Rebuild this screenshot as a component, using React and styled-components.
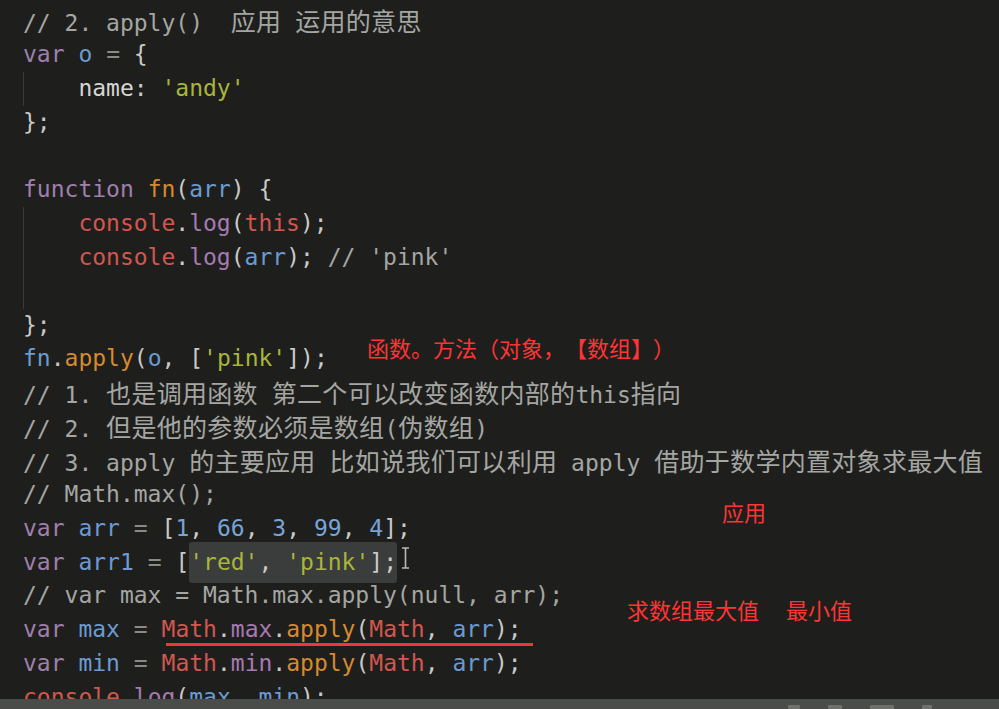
import React from 'react'
import styled, { createGlobalStyle } from 'styled-components'

const GlobalStyle = createGlobalStyle`
  html, body {
    margin: 0;
    padding: 0;
    background: #1e1f1d;
  }
`

// token colours, roughly a muted monokai as it shows in the video
const colors = {
  cm: '#a5a6a2',
  kw: '#a07fac',
  id: '#6b9bd2',
  op: '#8a8b87',
  p: '#c9c9c6',
  prop: '#d6d6d3',
  str: '#a9b53b',
  fn: '#d68a2f',
  obj: '#d1574f',
  mth: '#a67ab1',
  num: '#79a4d8',
}

const LINE = 33.85

const Screen = styled.div`
  width: 999px;
  height: 709px;
  display: flex;
  flex-direction: column;
  background: #1e1f1d;
  overflow: hidden;
`

const Editor = styled.div`
  position: relative;
  flex: 1;
  overflow: hidden;
  padding: 4px 0 0 23px;
  font-family: 'DejaVu Sans Mono', 'Liberation Mono', monospace;
  font-size: 23px;
  color: #c9c9c6;
`

const Line = styled.div`
  height: ${LINE}px;
  line-height: ${LINE}px;
  white-space: pre;
`

const Indent = styled.span`
  display: inline-block;
  width: 4ch;
  height: ${LINE}px;
  vertical-align: top;
  box-sizing: border-box;
  border-left: 1px solid ${p => (p.$guide ? '#3a3b33' : 'transparent')};
`

const Tok = styled.span`
  color: ${p => colors[p.$k] || colors.p};
`

const Cjk = styled.span`
  font-family: 'Noto Sans CJK SC', sans-serif;
  font-size: 25px;
  letter-spacing: 0.3px;
  text-spacing-trim: space-all;
`

const Selection = styled.span`
  background: #3b3d3c;
  border-radius: 3px;
  padding: 7px 0 8px;
`

const Note = styled.div`
  position: absolute;
  left: ${p => p.$x}px;
  top: ${p => p.$y}px;
  font-family: 'Noto Sans CJK SC', sans-serif;
  font-size: 22px;
  line-height: 22px;
  color: #ff3434;
  white-space: pre;
  text-spacing-trim: space-all;
  display: flex;
  gap: ${p => p.$gap || 0}px;
`

const Underline = styled.div`
  position: absolute;
  left: 166px;
  top: 643px;
  width: 367px;
  height: 3px;
  background: #f5333a;
`

const Caret = styled.svg`
  position: absolute;
  left: 401px;
  top: 547px;
`

const PlayerBar = styled.div`
  height: 10px;
  background: #4a4c49;
  display: flex;
  gap: 28px;
  padding-left: 788px;
`

const Blip = styled.span`
  margin-top: 6px;
  width: ${p => p.$w}px;
  height: 4px;
  background: #6e706c;
  border-radius: 1px;
`

const CJK_RUN = /([\u3000-\u303f\u4e00-\u9fff\uff00-\uffef]+)/
const CJK_CHAR = /[\u3000-\u303f\u4e00-\u9fff\uff00-\uffef]/

const splitCjk = text =>
  text.split(CJK_RUN).map((part, i) => (CJK_CHAR.test(part) ? <Cjk key={i}>{part}</Cjk> : part))

const T = ({ k, children }) => <Tok $k={k}>{splitCjk(children)}</Tok>

const lines = [
  { toks: [['// 2. apply()  应用 运用的意思', 'cm']] },
  { toks: [['var', 'kw'], [' '], ['o', 'id'], [' '], ['=', 'op'], [' '], ['{', 'p']] },
  { indent: true, toks: [['name', 'prop'], [':', 'p'], [' '], ["'andy'", 'str']] },
  { toks: [['};', 'p']] },
  { toks: [] },
  {
    toks: [['function', 'kw'], [' '], ['fn', 'fn'], ['(', 'p'], ['arr', 'id'], [')', 'p'], [' '], ['{', 'p']],
  },
  {
    indent: true,
    toks: [['console', 'obj'], ['.', 'p'], ['log', 'mth'], ['(', 'p'], ['this', 'obj'], [');', 'p']],
  },
  {
    indent: true,
    toks: [
      ['console', 'obj'], ['.', 'p'], ['log', 'mth'], ['(', 'p'], ['arr', 'id'], [');', 'p'],
      [" // 'pink'", 'cm'],
    ],
  },
  { indent: true, toks: [] },
  { toks: [['};', 'p']] },
  {
    toks: [
      ['fn', 'id'], ['.', 'p'], ['apply', 'fn'], ['(', 'p'], ['o', 'id'], [', ', 'p'], ['[', 'p'],
      ["'pink'", 'str'], [']);', 'p'],
    ],
  },
  { toks: [['// 1. 也是调用函数 第二个可以改变函数内部的this指向', 'cm']] },
  { toks: [['// 2. 但是他的参数必须是数组(伪数组)', 'cm']] },
  { toks: [['// 3. apply 的主要应用 比如说我们可以利用 apply 借助于数学内置对象求最大值', 'cm']] },
  { toks: [['// Math.max();', 'cm']] },
  {
    toks: [
      ['var', 'kw'], [' '], ['arr', 'id'], [' '], ['=', 'op'], [' '], ['[', 'p'],
      ['1', 'num'], [', ', 'p'], ['66', 'num'], [', ', 'p'], ['3', 'num'], [', ', 'p'],
      ['99', 'num'], [', ', 'p'], ['4', 'num'], ['];', 'p'],
    ],
  },
  { selection: true },
  { toks: [['// var max = Math.max.apply(null, arr);', 'cm']] },
  {
    toks: [
      ['var', 'kw'], [' '], ['max', 'id'], [' '], ['=', 'op'], [' '], ['Math', 'obj'], ['.', 'p'],
      ['max', 'mth'], ['.', 'p'], ['apply', 'fn'], ['(', 'p'], ['Math', 'obj'], [', ', 'p'],
      ['arr', 'id'], [');', 'p'],
    ],
  },
  {
    toks: [
      ['var', 'kw'], [' '], ['min', 'id'], [' '], ['=', 'op'], [' '], ['Math', 'obj'], ['.', 'p'],
      ['min', 'mth'], ['.', 'p'], ['apply', 'fn'], ['(', 'p'], ['Math', 'obj'], [', ', 'p'],
      ['arr', 'id'], [');', 'p'],
    ],
  },
  {
    toks: [
      ['console', 'obj'], ['.', 'p'], ['log', 'mth'], ['(', 'p'], ['max', 'id'], [', ', 'p'],
      ['min', 'id'], [');', 'p'],
    ],
  },
]

const renderToks = toks => toks.map(([text, k], i) => <T key={i} k={k || 'p'}>{text}</T>)

export default function App() {
  return (
    <Screen>
      <GlobalStyle />
      <Editor>
        {lines.map((line, i) => {
          if (line.selection) {
            return (
              <Line key={i}>
                <T k="kw">var</T> <T k="id">arr1</T> <T k="op">=</T> <T k="p">[</T>
                <Selection>
                  <T k="str">'red'</T>
                  <T k="p">, </T>
                  <T k="str">'pink'</T>
                  <T k="p">];</T>
                </Selection>
              </Line>
            )
          }
          return (
            <Line key={i}>
              {line.indent && <Indent $guide />}
              {renderToks(line.toks)}
            </Line>
          )
        })}

        <Note $x={367} $y={336}>函数。方法（对象，【数组】）</Note>
        <Note $x={722} $y={500}>应用</Note>
        <Note $x={627} $y={598} $gap={27}>
          <span>求数组最大值</span>
          <span>最小值</span>
        </Note>
        <Underline />
        <Caret width="9" height="22" viewBox="0 0 9 22">
          <path d="M1 1h7M4.5 1v20M1 21h7" stroke="#b9b9b5" strokeWidth="1.6" fill="none" />
        </Caret>
      </Editor>
      <PlayerBar>
        <Blip $w={12} />
        <Blip $w={14} />
        <Blip $w={24} />
        <Blip $w={10} />
      </PlayerBar>
    </Screen>
  )
}
